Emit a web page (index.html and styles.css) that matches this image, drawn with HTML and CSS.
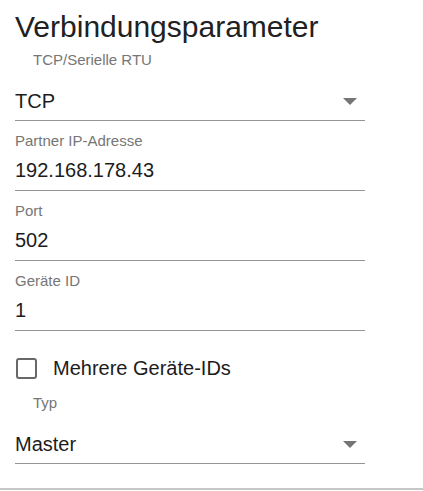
FILE: index.html
```html
<!DOCTYPE html>
<html lang="de">
<head>
<meta charset="utf-8">
<title>Verbindungsparameter</title>
<link rel="stylesheet" href="styles.css">
</head>
<body>
<div class="panel">
  <h1 class="title">Verbindungsparameter</h1>

  <div class="field select first">
    <div class="label indent">TCP/Serielle RTU</div>
    <div class="value-row">
      <span class="value">TCP</span>
      <span class="arrow"></span>
    </div>
  </div>

  <div class="field">
    <div class="label">Partner IP-Adresse</div>
    <div class="value">192.168.178.43</div>
  </div>

  <div class="field">
    <div class="label">Port</div>
    <div class="value">502</div>
  </div>

  <div class="field">
    <div class="label">Geräte ID</div>
    <div class="value">1</div>
  </div>

  <label class="check-row">
    <span class="box"></span>
    <span class="check-text">Mehrere Geräte-IDs</span>
  </label>

  <div class="field select last">
    <div class="label indent">Typ</div>
    <div class="value-row">
      <span class="value">Master</span>
      <span class="arrow"></span>
    </div>
  </div>
</div>
<div class="bottom-rule"></div>
</body>
</html>
```
FILE: styles.css
```css
html, body {
  margin: 0;
  padding: 0;
  background: #ffffff;
}

body {
  font-family: "Liberation Sans", Arial, sans-serif;
  color: rgba(0, 0, 0, 0.87);
  width: 423px;
  height: 491px;
  overflow: hidden;
  position: relative;
}

.panel {
  padding: 9px 0 0 15px;
  width: 350px;
}

.title {
  margin: 0;
  font-size: 30px;
  line-height: 36px;
  font-weight: 400;
  color: #212121;
  white-space: nowrap;
}

.field {
  border-bottom: 1px solid #949494;
  padding: 11px 0 8px;
}

.label {
  font-size: 15px;
  line-height: 18px;
  color: #767676;
}

.label.indent {
  padding-left: 18px;
}

.value {
  font-size: 20px;
  line-height: 24px;
  color: #1c1c1c;
  margin-top: 8px;
  display: block;
}

.select {
  padding-bottom: 7px;
}

.select.first {
  padding-top: 6px;
}

.select.last {
  padding-top: 14px;
}

.select .value-row {
  margin-top: 20px;
  display: flex;
  align-items: center;
  justify-content: space-between;
  padding-right: 8px;
  height: 24px;
}

.select .value {
  margin-top: 0;
}

.arrow {
  width: 0;
  height: 0;
  border-left: 7px solid transparent;
  border-right: 7px solid transparent;
  border-top: 7px solid #757575;
}

.check-row {
  display: flex;
  align-items: center;
  height: 24px;
  margin-top: 25px;
  gap: 16px;
}

.box {
  width: 21px;
  height: 21px;
  box-sizing: border-box;
  border: 2.5px solid #686868;
  border-radius: 3px;
  margin-left: 1px;
}

.check-text {
  font-size: 20px;
  line-height: 24px;
  color: #1c1c1c;
}

.bottom-rule {
  position: absolute;
  left: 0;
  right: 0;
  top: 488px;
  height: 2px;
  background: #c6c6c6;
}
```
